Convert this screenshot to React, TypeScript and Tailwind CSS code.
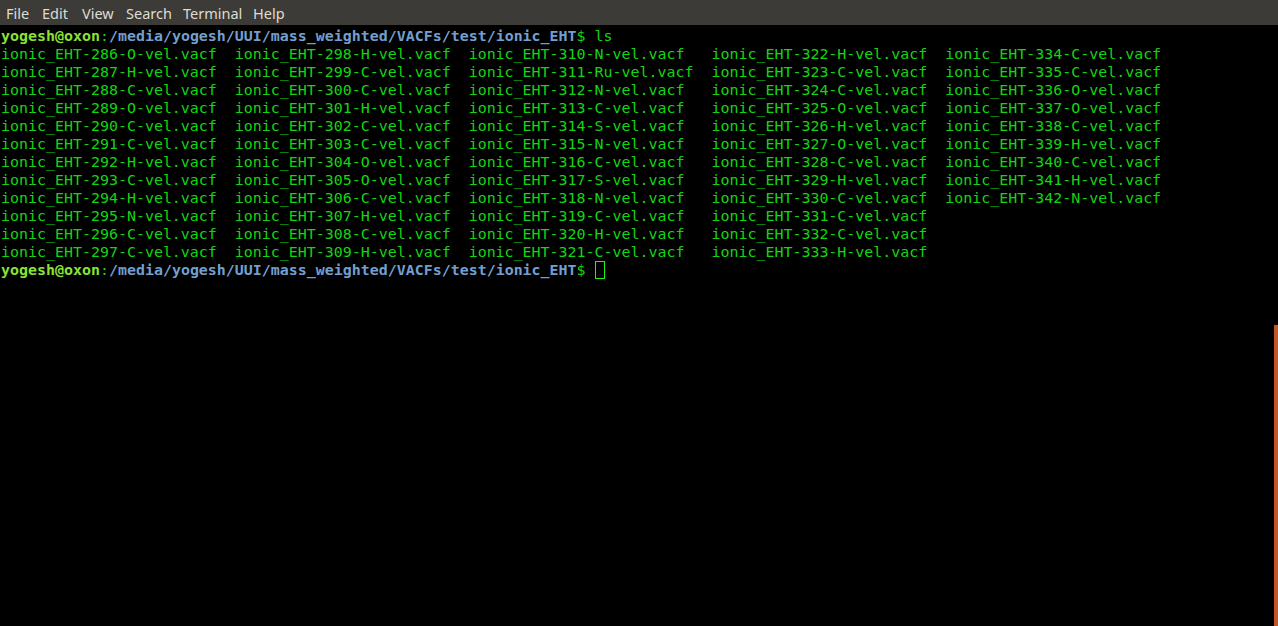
const menu = [
  { label: "File", w: "w-[36px]" },
  { label: "Edit", w: "w-[40px]" },
  { label: "View", w: "w-[44px]" },
  { label: "Search", w: "w-[57px]" },
  { label: "Terminal", w: "w-[70px]" },
  { label: "Help", w: "w-[40px]" },
]

const columns = [
  { start: 286, count: 12, width: 26 },
  { start: 298, count: 12, width: 26 },
  { start: 310, count: 12, width: 27 },
  { start: 322, count: 12, width: 26 },
  { start: 334, count: 9, width: 26 },
]

const elements: Record<number, string> = {
  286: "O", 287: "H", 288: "C", 289: "O", 290: "C", 291: "C", 292: "H", 293: "C", 294: "H", 295: "N", 296: "C", 297: "C",
  298: "H", 299: "C", 300: "C", 301: "H", 302: "C", 303: "C", 304: "O", 305: "O", 306: "C", 307: "H", 308: "C", 309: "H",
  310: "N", 311: "Ru", 312: "N", 313: "C", 314: "S", 315: "N", 316: "C", 317: "S", 318: "N", 319: "C", 320: "H", 321: "C",
  322: "H", 323: "C", 324: "C", 325: "O", 326: "H", 327: "O", 328: "C", 329: "H", 330: "C", 331: "C", 332: "C", 333: "H",
  334: "C", 335: "C", 336: "O", 337: "O", 338: "C", 339: "H", 340: "C", 341: "H", 342: "N",
}

const fileName = (n: number) => `ionic_EHT-${n}-${elements[n]}-vel.vacf`

function Prompt() {
  return (
    <>
      <span className="font-bold text-[#8ae234]">yogesh@oxon</span>
      <span>:</span>
      <span className="font-bold text-[#729fcf]">/media/yogesh/UUI/mass_weighted/VACFs/test/ionic_EHT</span>
      <span>$ </span>
    </>
  )
}

export default function App() {
  const rows = Array.from({ length: 12 }, (_, r) =>
    columns.map((c) => (r < c.count ? fileName(c.start + r).padEnd(c.width, " ") : "")).join("").trimEnd()
  )

  return (
    <div className="w-[1278px] h-[626px] bg-black flex flex-col overflow-hidden">
      {/* menu bar */}
      <div className="h-[25px] bg-[#3c3b37] flex items-center pt-[2px] pl-[6px] text-[14.5px] text-[#dfdbd2] font-['Noto_Sans',sans-serif]">
        {menu.map((m) => (
          <span key={m.label} className={`${m.w} shrink-0 leading-none`}>
            {m.label}
          </span>
        ))}
      </div>

      {/* terminal body */}
      <div className="relative flex-1 pt-[2px] pl-[1px]">
        <pre className="font-['DejaVu_Sans_Mono',monospace] text-[14.95px] leading-[18px] text-[#14d414] whitespace-pre">
          <div>
            <Prompt />
            <span>ls</span>
          </div>
          {rows.map((row, i) => (
            <div key={i}>{row}</div>
          ))}
          <div className="flex items-center">
            <Prompt />
            <span className="inline-block w-[10px] h-[18px] border border-[#1ef01e]" />
          </div>
        </pre>

        {/* scrollbar thumb */}
        <div className="absolute right-0 top-[300px] bottom-0 w-[4px] bg-[#c4562c]" />
      </div>
    </div>
  )
}
